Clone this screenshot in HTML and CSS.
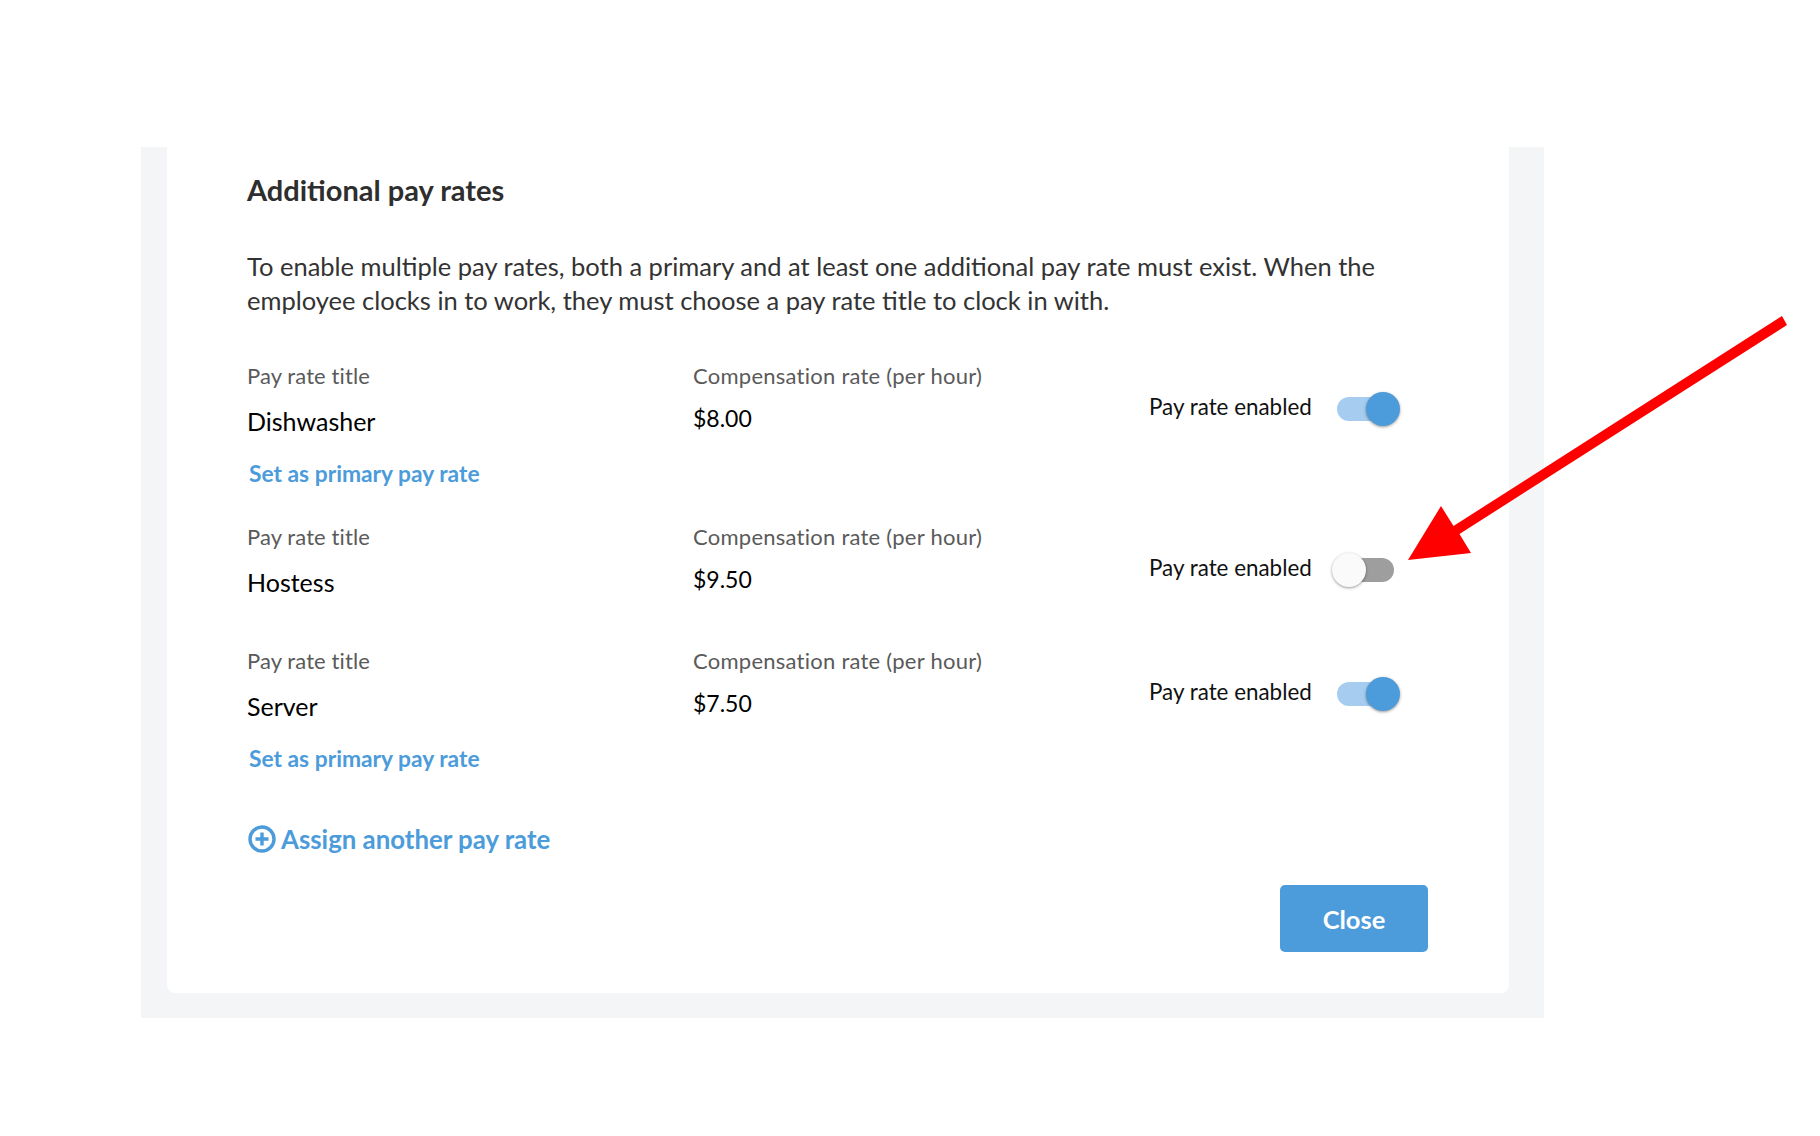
FILE: index.html
```html
<!DOCTYPE html>
<html lang="en">
<head>
  <meta charset="UTF-8"/>
  <title>Additional pay rates</title>
  <link rel="stylesheet" href="styles.css">
</head>
<body>
  <div class="panel">
    <div class="card">
      <h2>Additional pay rates</h2>
      <p class="intro">To enable multiple pay rates, both a primary and at least one additional pay rate must exist. When the employee clocks in to work, they must choose a pay rate title to clock in with.</p>

      <!-- Pay rates -->
      <div class="rate rate-link">
        <div class="col-title">
          <div class="label">Pay rate title</div>
          <div class="name">Dishwasher</div>
          <a class="set-primary">Set as primary pay rate</a>
        </div>
        <div class="col-comp">
          <div class="label">Compensation rate (per hour)</div>
          <div class="value">$8.00</div>
        </div>
        <div class="col-toggle">
          <span class="toggle-label">Pay rate enabled</span>
          <span class="toggle on"><span class="thumb"></span></span>
        </div>
      </div>

      <div class="rate">
        <div class="col-title">
          <div class="label">Pay rate title</div>
          <div class="name">Hostess</div>
        </div>
        <div class="col-comp">
          <div class="label">Compensation rate (per hour)</div>
          <div class="value">$9.50</div>
        </div>
        <div class="col-toggle">
          <span class="toggle-label">Pay rate enabled</span>
          <span class="toggle"><span class="thumb"></span></span>
        </div>
      </div>

      <div class="rate rate-link">
        <div class="col-title">
          <div class="label">Pay rate title</div>
          <div class="name">Server</div>
          <a class="set-primary">Set as primary pay rate</a>
        </div>
        <div class="col-comp">
          <div class="label">Compensation rate (per hour)</div>
          <div class="value">$7.50</div>
        </div>
        <div class="col-toggle">
          <span class="toggle-label">Pay rate enabled</span>
          <span class="toggle on"><span class="thumb"></span></span>
        </div>
      </div>

      <a class="assign">
        <svg width="28" height="28" viewBox="0 0 28 28" fill="none" stroke="#4c9bda" stroke-width="3.4">
          <circle cx="14" cy="14" r="12"/>
          <path d="M14 7.5v13M7.5 14h13"/>
        </svg>
        Assign another pay rate
      </a>

      <div class="actions">
        <button class="close-btn">Close</button>
      </div>
    </div>
  </div>

  <!-- Red annotation arrow -->
  <svg class="arrow" width="1820" height="1136" viewBox="0 0 1820 1136">
    <polygon fill="#ff0000" points="1408,560 1441,506 1453.5,526 1782,316 1787,325 1459.5,534 1471,553"/>
  </svg>
</body>
</html>
```

FILE: styles.css
```css
body{
  margin: 0;
  padding: 147px 0 0 141px;
  background: #fff;
  font-family: "Lato", "Liberation Sans", sans-serif;
  color: #333;
}
.panel{
  width: 1403px;
  height: 871px;
  box-sizing: border-box;
  padding: 0 35px 25px 26px;
  background: #f4f5f7;
}
.card{
  height: 100%;
  box-sizing: border-box;
  padding: 26px 0 0 80px;
  background: #fff;
  border-radius: 0 0 8px 8px;
}
h2{
  margin: 0;
  font-size: 29px;
  line-height: 34px;
  font-weight: 700;
  color: #2e2e2e;
}
.intro{
  margin: 43px 0 44px;
  width: 1150px;
  font-size: 25.5px;
  line-height: 33.6px;
}
.rate{
  display: grid;
  grid-template-columns: 446px 456px auto;
  height: 124px;
}
.rate-link{
  height: 161px;
}
.label{
  font-size: 22px;
  line-height: 30px;
  letter-spacing: 0.1px;
  color: #5a5a5a;
}
.col-comp .label{
  letter-spacing: 0.25px;
}
.name{
  margin-top: 15px;
  font-size: 25px;
  line-height: 30px;
  color: #000;
}
.value{
  margin-top: 12px;
  font-size: 23px;
  line-height: 30px;
  color: #000;
}
.set-primary{
  display: block;
  margin: 22px 0 0 2px;
  font-size: 22.8px;
  line-height: 30px;
  font-weight: 700;
  color: #4c9bda;
}
.col-toggle{
  display: flex;
  align-items: center;
  height: 34px;
  margin-top: 31px;
}
.toggle-label{
  width: 188px;
  padding-bottom: 6px;
  font-size: 22.4px;
  color: #111;
}
.toggle{
  position: relative;
  display: block;
  width: 57px;
  height: 24px;
  border-radius: 12px;
  background: #9e9e9e;
}
.toggle .thumb{
  position: absolute;
  top: -5px;
  left: -5px;
  width: 34px;
  height: 34px;
  border-radius: 50%;
  background: #fafafa;
  box-shadow: 0 1px 3px rgba(0, 0, 0, 0.4);
}
.toggle.on{
  background: #a6cdef;
}
.toggle.on .thumb{
  left: 29px;
  background: #4c9bda;
}
.assign{
  display: flex;
  align-items: center;
  gap: 5px;
  margin: 14px 0 0 1px;
  height: 36px;
  font-size: 25.8px;
  font-weight: 700;
  color: #4c9bda;
}
.actions{
  display: flex;
  justify-content: flex-end;
  margin-top: 28px;
  padding-right: 81px;
}
.close-btn{
  width: 148px;
  height: 67px;
  border: none;
  border-radius: 5px;
  background: #4c9bda;
  color: #fff;
  font-family: inherit;
  font-size: 25.5px;
  font-weight: 700;
}
.arrow{
  position: absolute;
  top: 0;
  left: 0;
  pointer-events: none;
}
```
